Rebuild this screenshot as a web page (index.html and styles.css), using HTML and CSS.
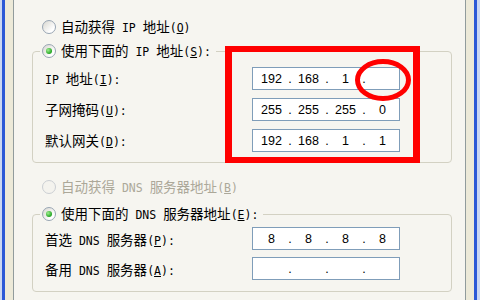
FILE: index.html
```html
<!DOCTYPE html>
<html lang="zh-CN">
<head>
<meta charset="utf-8">
<title>TCP/IP 属性</title>
<link rel="stylesheet" href="styles.css">
</head>
<body>
<div class="win">
  <div class="frame">
    <div class="panel">
      <div class="opt top"><span class="radio"></span><span>自动获得<span class="m"> IP </span>地址<span class="m">(<u>O</u>)</span></span></div>
      <fieldset class="grp g1">
        <legend class="opt"><span class="radio on"></span><span>使用下面的<span class="m"> IP </span>地址<span class="m">(<u>S</u>):</span></span></legend>
        <div class="rows">
          <div class="row"><label><span class="m">IP </span>地址<span class="m">(<u>I</u>):</span></label>
            <div class="ip"><span>192</span><i>.</i><span>168</span><i>.</i><span>1</span><i>.</i><span></span></div></div>
          <div class="row"><label>子网掩码<span class="m">(<u>U</u>):</span></label>
            <div class="ip"><span>255</span><i>.</i><span>255</span><i>.</i><span>255</span><i>.</i><span>0</span></div></div>
          <div class="row"><label>默认网关<span class="m">(<u>D</u>):</span></label>
            <div class="ip"><span>192</span><i>.</i><span>168</span><i>.</i><span>1</span><i>.</i><span>1</span></div></div>
        </div>
      </fieldset>
      <div class="opt dis"><span class="radio"></span><span>自动获得<span class="m"> DNS </span>服务器地址<span class="m">(<u>B</u>)</span></span></div>
      <fieldset class="grp g2">
        <legend class="opt"><span class="radio on"></span><span>使用下面的<span class="m"> DNS </span>服务器地址<span class="m">(<u>E</u>):</span></span></legend>
        <div class="rows">
          <div class="row"><label>首选<span class="m"> DNS </span>服务器<span class="m">(<u>P</u>):</span></label>
            <div class="ip"><span>8</span><i>.</i><span>8</span><i>.</i><span>8</span><i>.</i><span>8</span></div></div>
          <div class="row"><label>备用<span class="m"> DNS </span>服务器<span class="m">(<u>A</u>):</span></label>
            <div class="ip"><span></span><i>.</i><span></span><i>.</i><span></span><i>.</i><span></span></div></div>
        </div>
      </fieldset>
    </div>
  </div>
  <div class="mark-rect"></div>
  <svg class="mark-oval" width="56" height="42" viewBox="0 0 56 42"><ellipse cx="28" cy="21" rx="25.5" ry="18.5" fill="none" stroke="#ff0000" stroke-width="5"/></svg>
</div>
</body>
</html>
```
FILE: styles.css
```css
* { box-sizing: border-box; }
body { margin: 0; }
.win {
  position: relative;
  width: 480px;
  height: 300px;
  padding: 0 3px 0 2px;
  background: #C9D6F2;
  overflow: hidden;
}
.frame {
  height: 100%;
  border-left: 3px solid #2B58D6;
  border-right: 3px solid #2B58D6;
  background: #ECE9D8;
  padding: 0 8px;
}
.panel {
  height: 100%;
  border-left: 1px solid #919B9C;
  border-right: 1px solid #919B9C;
  background: #F6F5F0;
  padding: 19px 13px 0 18px;
  font-family: "Noto Sans CJK SC", sans-serif;
  font-size: 13.5px;
  color: #000;
  display: flex;
  flex-direction: column;
}
.m {
  font-family: "DejaVu Sans Mono", monospace;
  font-size: 11.5px;
}
u { text-decoration: underline; text-underline-offset: 1px; }
.opt {
  display: flex;
  align-items: center;
  gap: 5px;
  height: 16px;
  line-height: 16px;
  white-space: nowrap;
}
.top, .dis { margin-left: 10px; }
.dis { margin-top: 16px; color: #ACA899; }
.radio {
  flex: none;
  position: relative;
  width: 14px;
  height: 14px;
  border-radius: 50%;
  border: 1px solid #98A5B3;
  background: linear-gradient(135deg, #D8D7D0, #FFFFFF 75%);
}
.dis .radio { border-color: #CBCFD3; background: #F4F3EE; }
.radio.on::after {
  content: "";
  position: absolute;
  left: 3px;
  top: 3px;
  width: 6px;
  height: 6px;
  border-radius: 50%;
  background: radial-gradient(circle at 35% 35%, #A0EE90, #23A523 70%);
}
.grp {
  margin: 8px 0 0;
  min-width: 0;
  border: 1px solid #D3D1C3;
  border-radius: 4px;
  padding: 0 12px 10px 7px;
}
.g2 { margin-top: 11px; padding-bottom: 11px; }
.grp legend { padding: 0 5px 0 2px; }
.rows {
  display: flex;
  flex-direction: column;
  gap: 8px;
  padding: 8px 0 0 5px;
}
.g2 .rows { gap: 7px; padding-top: 5px; }
.g2 label { padding-top: 2px; }
.row {
  display: grid;
  grid-template-columns: 207px 148px;
  align-items: center;
  height: 23px;
}
label { white-space: nowrap; line-height: 16px; }
.ip {
  display: flex;
  align-items: center;
  height: 23px;
  border: 1px solid #7F9DB9;
  background: #FFFFFF;
  padding-left: 4px;
  font-family: "Liberation Sans", Arial, sans-serif;
  font-size: 12.5px;
  color: #000;
}
.ip span { width: 29px; text-align: center; }
.ip i { font-style: normal; width: 8px; text-align: center; }
.mark-rect {
  position: absolute;
  left: 225px;
  top: 46px;
  width: 195px;
  height: 117px;
  border-style: solid;
  border-color: #FF0000;
  border-width: 6px 7px;
}
.mark-oval {
  position: absolute;
  left: 355px;
  top: 59px;
}
```
